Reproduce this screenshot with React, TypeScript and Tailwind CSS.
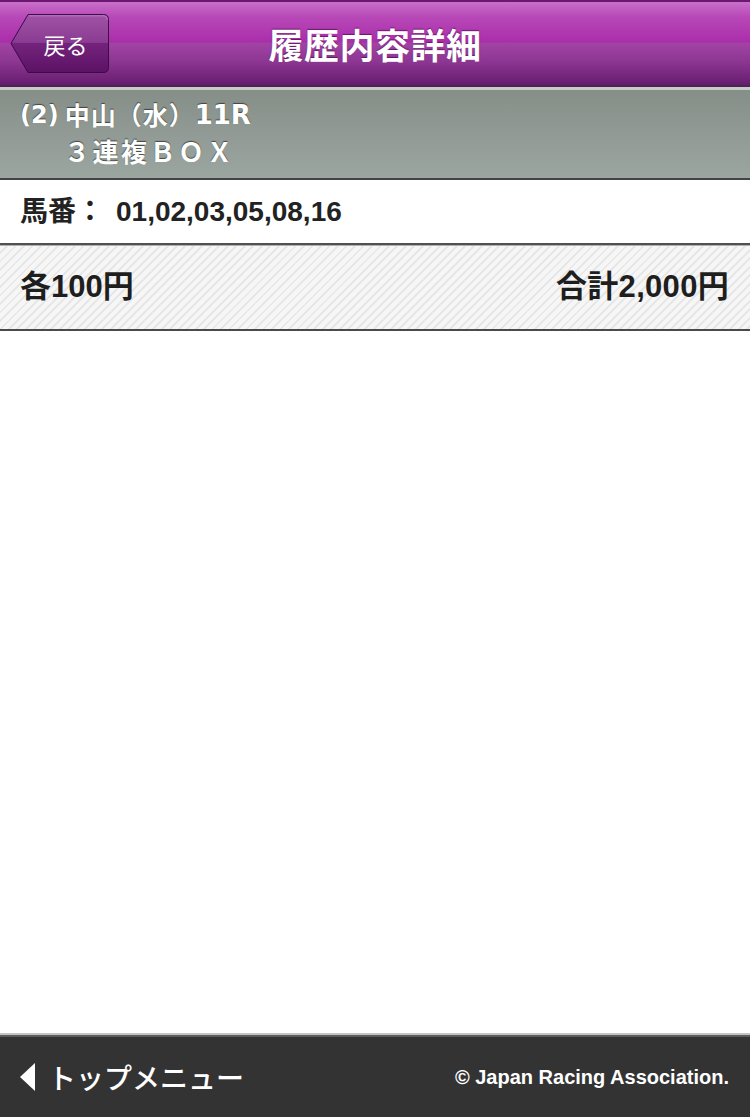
import React from "react";

const FONT = { fontFamily: '"Liberation Sans", "Noto Sans CJK JP", sans-serif' };
const WIDE = { fontFamily: '"DejaVu Sans", "Noto Sans CJK JP", sans-serif' };
const CJK = { fontFamily: '"Noto Sans CJK JP", sans-serif' };

function BackButton() {
  return (
    <div className="relative w-[99px] h-[59px] flex items-center justify-center pl-[12px]">
      <svg className="absolute inset-0" width="99" height="59" viewBox="0 0 99 59">
        <defs>
          <linearGradient id="bb" x1="0" y1="0" x2="0" y2="1">
            <stop offset="0" stopColor="#a053a6" />
            <stop offset="0.48" stopColor="#8a3c92" />
            <stop offset="0.5" stopColor="#74237c" />
            <stop offset="1" stopColor="#5c1264" />
          </linearGradient>
        </defs>
        <path
          d="M18,0.5 H93.5 Q98.5,0.5 98.5,5.5 V53.5 Q98.5,58.5 93.5,58.5 H18 L1,29.5 Z"
          fill="url(#bb)"
          stroke="#3c0c44"
          strokeWidth="1"
        />
        <path d="M19,1.8 H93 Q97.2,1.8 97.2,6" fill="none" stroke="#c68acc" strokeWidth="1" opacity="0.7" />
      </svg>
      <span className="relative text-white text-[22px] leading-none" style={CJK}>
        戻る
      </span>
    </div>
  );
}

export default function App() {
  return (
    <div className="w-full h-[1117px] flex flex-col bg-white" style={FONT}>
      {/* Header */}
      <div className="h-[87px] grid grid-cols-[1fr_auto_1fr] items-center border-t-2 border-b-2 border-t-[#6c1872] border-b-[#4a2650] bg-[linear-gradient(to_bottom,#c870c8_0%,#b848b8_18%,#aa2eaa_48%,#a243a4_50%,#8c3692_72%,#661d6e_100%)]">
        <div className="pl-[10px]">
          <BackButton />
        </div>
        <div
          className="text-white font-bold text-[35px] leading-none tracking-[0.5px] [text-shadow:0_-1px_1px_rgba(60,0,60,0.6)]"
          style={CJK}
        >
          履歴内容詳細
        </div>
        <div />
      </div>

      {/* Race info */}
      <div className="h-[93px] border-t-[3px] border-t-[#c6cdc7] border-b-2 border-b-[#444444] bg-[linear-gradient(to_bottom,#868e88,#9ca6a0)] pl-[20px] pt-[7px] text-white font-bold [text-shadow:0_-1px_1px_rgba(0,0,0,0.55)]">
        <div className="h-[35px] flex items-center">
          <span className="text-[24px] leading-none" style={WIDE}>(2)</span>
          <span className="text-[25px] leading-none tracking-[1px] ml-[6px]" style={CJK}>中山（水）</span>
          <span className="text-[26px] leading-none" style={WIDE}>11R</span>
        </div>
        <div className="h-[37px] flex items-center pl-[44px] text-[26px] leading-none tracking-[2.5px]" style={CJK}>
          ３連複ＢＯＸ
        </div>
      </div>

      {/* Horse numbers */}
      <div className="h-[65px] flex items-center border-b-2 border-b-[#505050] pl-[20px] text-[#222] font-bold text-[28px]">
        <span>馬番：</span>
        <span className="ml-[12px]">01,02,03,05,08,16</span>
      </div>

      {/* Amounts */}
      <div className="h-[86px] flex items-center justify-between border-t border-t-[#b0b0b0] border-b-2 border-b-[#4a4a4a] pl-[20px] pr-[21px] text-[#1e1e1e] font-bold text-[31px] bg-[repeating-linear-gradient(135deg,#f6f6f6_0px,#f6f6f6_4px,#e7e7e7_4px,#e7e7e7_6px)]">
        <span>各100円</span>
        <span className="tracking-[0.3px]">合計2,000円</span>
      </div>

      <div className="flex-1" />

      {/* Footer */}
      <div className="h-[84px] border-t-2 border-t-[#c4c4c4]">
        <div className="h-full border-t-2 border-t-[#5c5c5c] bg-[#333333] flex items-center justify-between pl-[20px] pr-[21px]">
          <div className="flex items-center">
            <svg width="16" height="28" viewBox="0 0 16 28">
              <polygon points="15,0 15,28 0,14" fill="#ffffff" />
            </svg>
            <span className="ml-[12px] text-white font-medium text-[28px] leading-none" style={CJK}>
              トップメニュー
            </span>
          </div>
          <span className="text-white font-bold text-[20px] leading-none">© Japan Racing Association.</span>
        </div>
      </div>
    </div>
  );
}
